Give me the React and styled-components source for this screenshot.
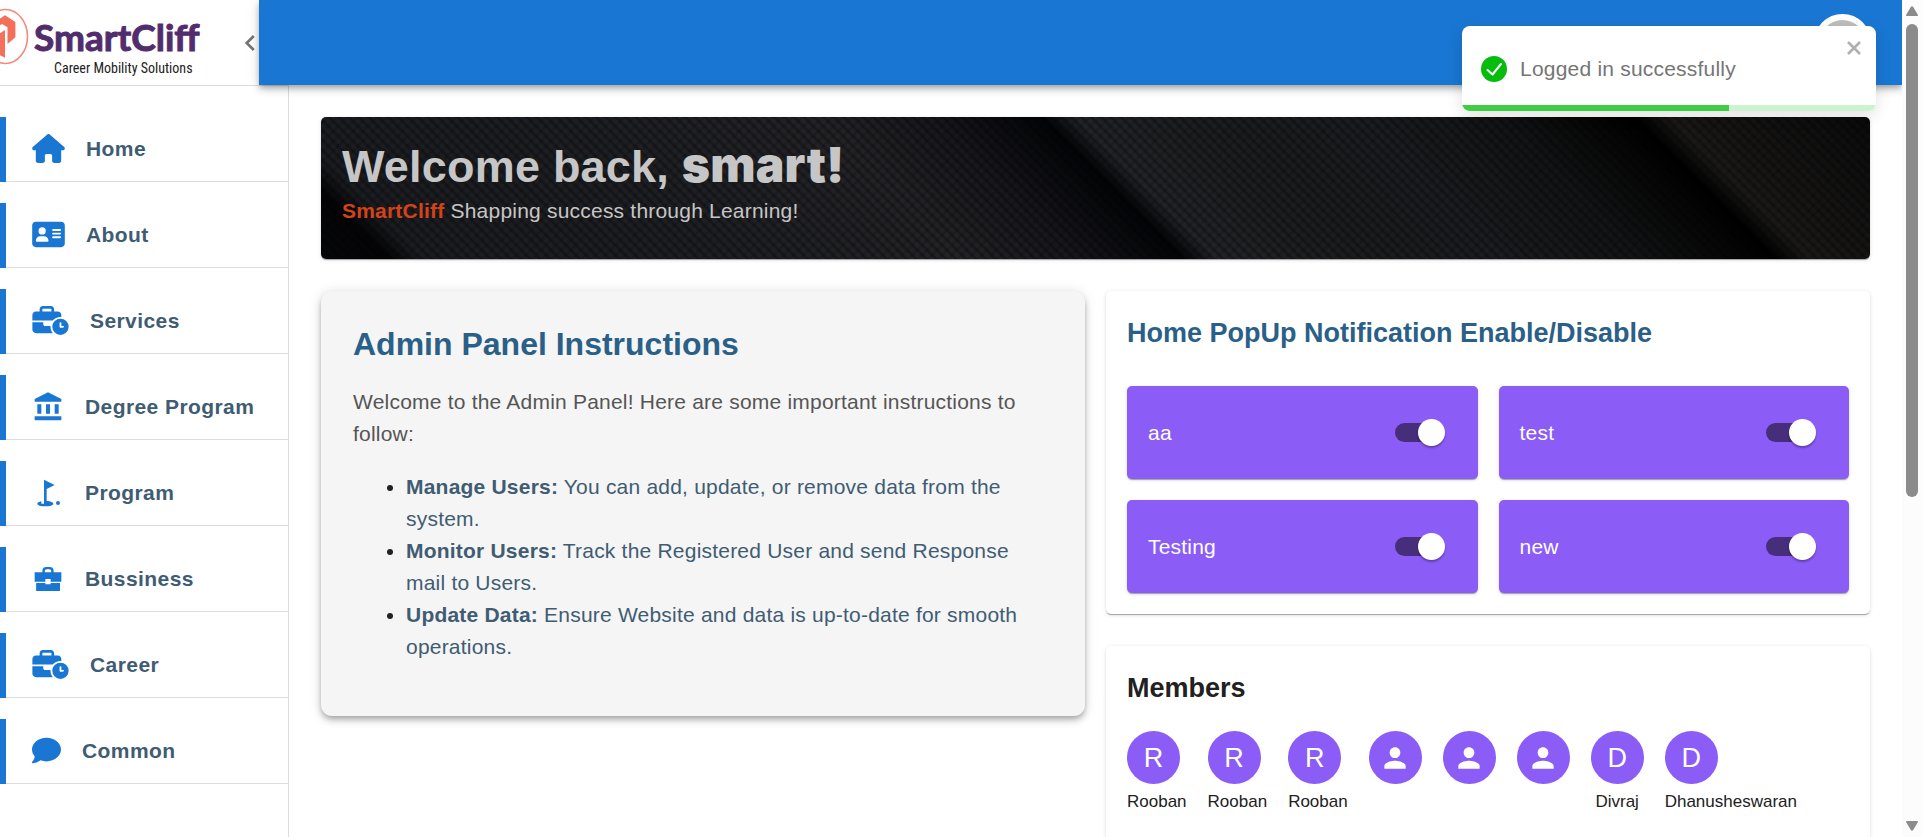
import React, { useState } from "react";
import styled, { createGlobalStyle } from "styled-components";
import { FaHouse, FaAddressCard, FaBusinessTime, FaComment } from "react-icons/fa6";
import { MdAccountBalance, MdGolfCourse, MdPerson } from "react-icons/md";

const GlobalStyle = createGlobalStyle`
  *, *::before, *::after { box-sizing: border-box; }
  html, body { margin: 0; padding: 0; }
  body {
    background: #fff;
    color: #212121;
    font-family: "Liberation Sans", Arial, sans-serif;
    font-size: 21px;
    line-height: 32px;
    letter-spacing: 0.01em;
  }
  h1, h2, h3, p, ul { margin: 0; padding: 0; }
`;

const elevation1 = "0 2px 1px -1px rgba(0,0,0,.2), 0 1px 1px rgba(0,0,0,.14), 0 1px 4px rgba(0,0,0,.12)";
const elevation4 = "0 3px 5px -1px rgba(0,0,0,.2), 0 5px 7px rgba(0,0,0,.14), 0 1px 13px rgba(0,0,0,.12)";

const Window = styled.div`
  display: flex;
  height: 100vh;
  overflow: hidden;
`;

const Shell = styled.div`
  flex: 1;
  min-width: 0;
  display: flex;
  flex-direction: column;
  overflow: hidden;
`;

const TopRow = styled.div`
  display: flex;
  flex: none;
  height: 85px;
`;

const Brand = styled.div`
  display: flex;
  align-items: center;
  justify-content: space-between;
  width: 259px;
  padding-right: 4px;
`;

const Logo = styled.svg`
  display: block;
  width: 205px;
  height: 85px;
`;

const CollapseButton = styled.button`
  display: flex;
  padding: 0;
  border: 0;
  background: none;
  color: #757575;
  cursor: pointer;
`;

const AppBar = styled.header`
  position: relative;
  z-index: 2;
  flex: 1;
  display: flex;
  align-items: center;
  justify-content: flex-end;
  padding-right: 31px;
  background: #1976d2;
  box-shadow: ${elevation4};
`;

const ProfileButton = styled.button`
  width: 57px;
  height: 57px;
  border: 6px solid #fff;
  border-radius: 50%;
  background: #bdbdbd;
  cursor: pointer;
`;

const Body = styled.div`
  flex: 1;
  min-height: 0;
  display: flex;
`;

const Sidebar = styled.nav`
  flex: none;
  width: 289px;
  padding-top: 31px;
  border-top: 1px solid #ddd;
  border-right: 1px solid #ddd;
`;

const NavList = styled.ul`
  display: grid;
  gap: 21px;
  list-style: none;
`;

const NavLink = styled.a`
  display: flex;
  align-items: center;
  gap: 21px;
  height: 65px;
  padding: 0 0 2px 26px;
  border-left: 6px solid #1976d2;
  box-shadow: inset 0 -1px 0 #ddd;
  color: #405c73;
  font-weight: 700;
  letter-spacing: 0.02em;
  text-decoration: none;

  svg {
    flex: none;
    width: ${(p) => p.$iconWidth}px;
    height: ${(p) => p.$iconHeight}px;
    color: #1976d2;
  }
`;

const Main = styled.main`
  flex: 1;
  min-width: 0;
  padding: 32px;
`;

const Banner = styled.section`
  height: 142px;
  margin-bottom: 32px;
  padding: 22px 21px;
  border-radius: 5px;
  box-shadow: ${elevation1};
  color: #c6c6c6;
  background:
    repeating-linear-gradient(45deg, rgba(0,0,0,.26) 0 2px, transparent 3px 6px, rgba(0,0,0,.26) 7px),
    repeating-linear-gradient(-45deg, rgba(0,0,0,.14) 0 2px, transparent 3px 6px, rgba(0,0,0,.14) 7px),
    linear-gradient(45deg,
      #07080c 0%, #040407 4%, #1b1c20 6%, #1e1f23 24%, #232327 38%, #16161b 45%, #030407 51%,
      #222327 53%, #1b1c1e 62%, #1b1c20 70%, #131415 78%, #000 86%,
      #1a1918 88%, #0c0b0b 100%);
`;

const BannerTitle = styled.h1`
  font-size: 45px;
  line-height: 56px;
  font-weight: 700;
`;

const UserName = styled.span`
  font-family: Inter, "Liberation Sans", sans-serif;
  font-size: 48px;
  line-height: 1;
  font-weight: 900;
`;

const Tagline = styled.p`
  font-size: 21px;
  strong { color: #d24418; }
`;

const Columns = styled.div`
  display: grid;
  grid-template-columns: repeat(2, minmax(0, 1fr));
  align-items: start;
  gap: 21px;
`;

const Instructions = styled.article`
  display: grid;
  gap: 21px;
  padding: 32px 32px 53px;
  border-radius: 11px;
  background: #f5f5f5;
  box-shadow: ${elevation4};
`;

const InstructionsTitle = styled.h2`
  color: #2a6087;
  font-size: 32px;
  line-height: 42px;
  letter-spacing: 0;
`;

const Intro = styled.p`
  color: #555;
`;

const Steps = styled.ul`
  && { padding-left: 53px; }
`;

const Step = styled.li`
  color: #405c73;
  &::marker { color: #212121; }
`;

const RightColumn = styled.div`
  display: grid;
  gap: 32px;
`;

const Card = styled.section`
  padding: 21px;
  border-radius: 5px;
  background: #fff;
  box-shadow: ${elevation1};
`;

const CardTitle = styled.h2`
  color: ${(p) => (p.$accent ? "#2a6087" : "#212121")};
  font-size: 27px;
  line-height: 43px;
  letter-spacing: 0;
`;

const ToggleGrid = styled.div`
  display: grid;
  grid-template-columns: repeat(2, minmax(0, 1fr));
  gap: 21px;
  margin-top: 31px;
`;

const ToggleTile = styled.label`
  display: flex;
  align-items: center;
  justify-content: space-between;
  height: 93px;
  padding: 0 38px 0 21px;
  border-radius: 5px;
  background: #8b5cf6;
  box-shadow: ${elevation1};
  color: #fff;
  cursor: pointer;
`;

const Switch = styled.input`
  appearance: none;
  display: flex;
  align-items: center;
  width: 45px;
  height: 19px;
  margin: 0;
  border-radius: 10px;
  background: #462e7b;
  cursor: pointer;

  &::before {
    content: "";
    flex: none;
    width: 27px;
    height: 27px;
    margin: 0 -5px;
    border-radius: 50%;
    background: #fff;
    box-shadow: 0 2px 2px rgba(0,0,0,.3);
  }
  &:checked { justify-content: flex-end; }
`;

const Members = styled.ul`
  display: flex;
  gap: 21px;
  margin-top: 21px;
  && { padding-bottom: 32px; }
  list-style: none;
`;

const Member = styled.li`
  min-width: 53px;
  font-size: 17px;
  line-height: 24px;
  letter-spacing: 0;
  text-align: center;
`;

const Avatar = styled.div`
  display: flex;
  align-items: center;
  justify-content: center;
  width: 53px;
  height: 53px;
  margin-bottom: 6px;
  border-radius: 50%;
  background: #8b5cf6;
  color: #fff;
  font-size: 27px;
`;

const Toast = styled.div`
  position: fixed;
  z-index: 10;
  top: 26px;
  right: 46px;
  width: 414px;
  border-radius: 8px;
  box-shadow: 0 5px 16px rgba(0,0,0,.12);
`;

const ToastBody = styled.div`
  position: relative;
  display: flex;
  align-items: center;
  gap: 13px;
  height: 85px;
  padding: 0 19px;
  border-radius: 8px;
  overflow: hidden;
  background: #fff;
  color: #757575;
`;

const CloseButton = styled.button`
  position: absolute;
  top: 15px;
  right: 15px;
  display: flex;
  padding: 0;
  border: 0;
  background: none;
  color: #b0b0b0;
  cursor: pointer;
`;

const ToastProgress = styled.div`
  position: absolute;
  inset: auto 0 0 0;
  height: 6px;
  background: linear-gradient(90deg, #41cc46 64.5%, #cdf2ce 64.5%);
`;

const ScrollRail = styled.aside`
  flex: none;
  display: flex;
  flex-direction: column;
  align-items: center;
  justify-content: space-between;
  width: 20px;
  padding: 6px 0;
  background: #fcfcfc;
`;

const ScrollTrack = styled.div`
  flex: 1;
  width: 12px;
  margin: 8px 0;
`;

const ScrollThumb = styled.div`
  height: 60%;
  border-radius: 6px;
  background: #8b8b8b;
`;

const BusinessIcon = () => (
  <svg viewBox="0 0 24 24" fill="currentColor" aria-hidden="true">
    <path d="M2 7h5.800V6a3 3 0 0 1 3-3h2.400a3 3 0 0 1 3 3v1H22v7h-8v-2h-4v2H2zM9.600 7h4.800V6a1.300 1.300 0 0 0-1.300-1.300h-2.200A1.300 1.300 0 0 0 9.600 6z" fillRule="evenodd" />
    <path d="M3.100 15H10v1h4v-1h7v6H3.100z" />
  </svg>
);

const ArrowIcon = ({ down }) => (
  <svg width="12" height="10" viewBox="0 0 12 10" fill="#8b8b8b" aria-hidden="true">
    <path d={down ? "M0.6 0h10.8q.8.4.4 1.2L7.2 9q-1.2 1.4-2.4 0L.2 1.2Q-.2.4.6 0z" : "M.6 10h10.8q.8-.4.4-1.2L7.2 1Q6-.4 4.8 1L.2 8.8q-.4.8.4 1.2z"} />
  </svg>
);

const NAV = [
  { label: "Home", Icon: FaHouse, size: [33, 29] },
  { label: "About", Icon: FaAddressCard, size: [33, 29] },
  { label: "Services", Icon: FaBusinessTime, size: [37, 29] },
  { label: "Degree Program", Icon: MdAccountBalance, size: [32, 32] },
  { label: "Program", Icon: MdGolfCourse, size: [32, 32] },
  { label: "Bussiness", Icon: BusinessIcon, size: [32, 32] },
  { label: "Career", Icon: FaBusinessTime, size: [37, 29] },
  { label: "Common", Icon: FaComment, size: [29, 29] },
];

const STEPS = [
  ["Manage Users:", "You can add, update, or remove data from the system."],
  ["Monitor Users:", "Track the Registered User and send Response mail to Users."],
  ["Update Data:", "Ensure Website and data is up-to-date for smooth operations."],
];

const POPUPS = ["aa", "test", "Testing", "new"];
const MEMBERS = ["Rooban", "Rooban", "Rooban", "", "", "", "Divraj", "Dhanusheswaran"];

function BrandLogo() {
  return (
    <Logo viewBox="0 0 205 85" role="img" aria-label="SmartCliff Career Mobility Solutions">
      <ellipse cx="5.500" cy="36.500" rx="22" ry="27" fill="none" stroke="#f58a79" strokeWidth="1.600" />
      <path d="M-4 21 5 15.300 15.400 22v15.300L7.500 44V27.300L2 24-4 28z" fill="#f4705a" />
      <path d="M-4 30.500 0 33.200 5 30v27.800L-4 53z" fill="#f4705a" />
      <text x="34" y="51" fill="#522d6d" stroke="#522d6d" strokeWidth="1" fontFamily="Lato, sans-serif" fontWeight="700" fontSize="37" letterSpacing="0">SmartCliff</text>
      <text x="54" y="73" fill="#222" fontFamily="'Roboto Condensed', Roboto, sans-serif" fontSize="14" letterSpacing="0">Career Mobility Solutions</text>
    </Logo>
  );
}

function PopupToggle({ name }) {
  const [on, setOn] = useState(true);
  return (
    <ToggleTile>
      {name}
      <Switch type="checkbox" checked={on} onChange={() => setOn(!on)} />
    </ToggleTile>
  );
}

function LoginToast() {
  return (
    <Toast role="alert">
      <ToastBody>
        <svg width="26" height="26" viewBox="0 0 26 26" aria-hidden="true">
          <circle cx="13" cy="13" r="13" fill="#07bc0c" />
          <path d="M6.500 14 11.500 18.500 20 8" fill="none" stroke="#fff" strokeWidth="2" strokeLinecap="round" strokeLinejoin="round" />
        </svg>
        Logged in successfully
        <CloseButton aria-label="Close">
          <svg width="14" height="14" viewBox="0 0 14 14" fill="none" stroke="currentColor" strokeWidth="2.600" aria-hidden="true">
            <path d="M1 1l12 12M13 1 1 13" />
          </svg>
        </CloseButton>
        <ToastProgress />
      </ToastBody>
    </Toast>
  );
}

export default function App() {
  return (
    <>
      <GlobalStyle />
      <Window>
        <Shell>
          <TopRow>
            <Brand>
              <BrandLogo />
              <CollapseButton aria-label="Collapse menu">
                <svg width="11" height="16" viewBox="7.500 6 8 12" fill="currentColor" aria-hidden="true">
                  <path d="M15.410 7.410 14 6l-6 6 6 6 1.410-1.410L10.830 12z" />
                </svg>
              </CollapseButton>
            </Brand>
            <AppBar>
              <ProfileButton aria-label="Profile" />
            </AppBar>
          </TopRow>
          <Body>
            <Sidebar>
              <NavList>
                {NAV.map(({ label, Icon, size }) => (
                  <li key={label}>
                    <NavLink href="#" $iconWidth={size[0]} $iconHeight={size[1]}><Icon />{label}</NavLink>
                  </li>
                ))}
              </NavList>
            </Sidebar>
            <Main>
              <Banner>
                <BannerTitle>Welcome back, <UserName>smart!</UserName></BannerTitle>
                <Tagline><strong>SmartCliff</strong> Shapping success through Learning!</Tagline>
              </Banner>
              <Columns>
                <Instructions>
                  <InstructionsTitle>Admin Panel Instructions</InstructionsTitle>
                  <Intro>Welcome to the Admin Panel! Here are some important instructions to follow:</Intro>
                  <Steps>
                    {STEPS.map(([title, text]) => (
                      <Step key={title}><strong>{title}</strong> {text}</Step>
                    ))}
                  </Steps>
                </Instructions>
                <RightColumn>
                  <Card>
                    <CardTitle $accent>Home PopUp Notification Enable/Disable</CardTitle>
                    <ToggleGrid>
                      {POPUPS.map((name) => <PopupToggle key={name} name={name} />)}
                    </ToggleGrid>
                  </Card>
                  <Card>
                    <CardTitle>Members</CardTitle>
                    <Members>
                      {MEMBERS.map((name, i) => (
                        <Member key={i}>
                          <Avatar>{name ? name[0] : <MdPerson size={32} />}</Avatar>
                          {name}
                        </Member>
                      ))}
                    </Members>
                  </Card>
                </RightColumn>
              </Columns>
            </Main>
          </Body>
        </Shell>
        <ScrollRail aria-hidden="true">
          <ArrowIcon />
          <ScrollTrack><ScrollThumb /></ScrollTrack>
          <ArrowIcon down />
        </ScrollRail>
      </Window>
      <LoginToast />
    </>
  );
}
